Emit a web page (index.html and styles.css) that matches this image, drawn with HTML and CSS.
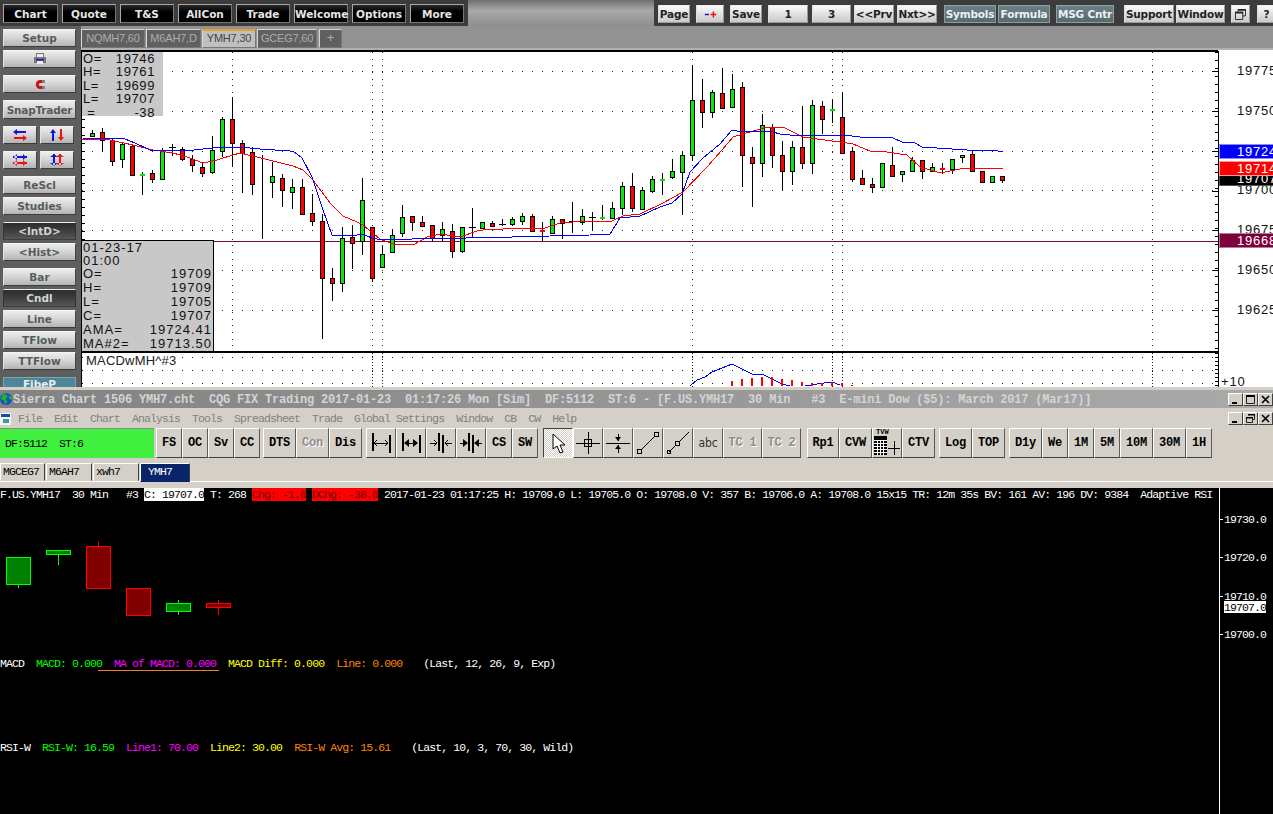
FILE: index.html
```html
<!DOCTYPE html>
<html lang="en">
<head>
<meta charset="utf-8">
<title>Sierra Chart</title>
<link rel="stylesheet" href="styles.css">
</head>
<body>
<div class="app">
  <section class="upper">
    <header class="topbar">
      <nav class="blackgroup">
        <button class="bk first">Chart</button><button class="bk">Quote</button><button class="bk">T&amp;S</button><button class="bk">AllCon</button><button class="bk">Trade</button><button class="bk">Welcome</button><button class="bk">Options</button><button class="bk">More</button>
      </nav>
      <div class="fade"></div>
      <div class="lightgroup">
        <button class="lt w32">Page</button>
        <button class="lt w28 gapl"><svg class="ic12" viewBox="0 0 18 10"><path class="i-blue" d="M1 4h6v2H1z"/><path class="i-red" d="M9 4h3V1h2v3h3v2h-3v3h-2V6H9z"/></svg></button>
        <button class="lt w32 gapl">Save</button>
        <button class="lt w40 gapl">1</button>
        <button class="lt w39 gap4">3</button>
        <button class="lt w40 gap3">&lt;&lt;Prv</button>
        <button class="lt w40 gap3">Nxt&gt;&gt;</button>
        <button class="lt w52 teal gap7">Symbols</button>
        <button class="lt w52 teal gap2">Formula</button>
        <button class="lt w58 teal gapl">MSG Cntr</button>
        <button class="lt w50 gap10">Support</button>
        <button class="lt w49 gap2">Window</button>
        <button class="lt w19 gapl"><svg class="ic12" viewBox="0 0 12 12"><path class="i-line" d="M3.500 .5h8v7h-3M3.500 .5v2M.5 3.500h8v8h-8z"/><path class="i-fill" d="M3 0h9v2H3zM0 3h9v2H0z"/></svg></button>
        <button class="lt w19 gap7">?</button>
      </div>
    </header>
    <div class="workspace">
      <aside class="sidebar">
        <div class="sidegroup"><button class="sb">Setup</button>
          <button class="sb"><svg class="ic14" viewBox="0 0 14 12"><path class="i-gray" d="M3 0h8v4H3zM1 4h12v6H1z"/><path class="i-lightfill" d="M4 1h6v3H4zM4 8h6v3H4z"/><path class="i-blue" d="M3 6h8v1.500H3z"/></svg></button></div>
        <div class="sidegroup"><button class="sb"><svg class="icmag" viewBox="0 0 14 12"><path class="i-darkred" d="M8 0h3v4H8a2 2 0 0 0 0 4h3v4H8A6 6 0 0 1 8 0z"/><path class="i-gray" d="M11 0h3v4h-3zM11 8h3v4h-3z"/></svg></button></div>
        <div class="sidegroup"><button class="sb snap">SnapTrader</button></div>
        <div class="siderow">
          <button class="sb half"><svg class="ic14" viewBox="0 0 14 12"><path class="i-blue" d="M4 0v2h9v2H4v2L0 3z"/><path class="i-red" d="M10 6v2H1v2h9v2l4-3z"/></svg></button>
          <button class="sb half"><svg class="ic14" viewBox="0 0 14 12"><path class="i-blue" d="M3 0 0 4h2v8h2V4h2z"/><path class="i-red" d="M11 12l3-4h-2V0h-2v8H8z"/></svg></button>
        </div>
        <div class="siderow">
          <button class="sb half"><svg class="ic14" viewBox="0 0 14 12"><path class="i-blue" d="M0 2h14v2H0zM4 0l-3 3 3 3zM10 0l3 3-3 3z"/><path class="i-red" d="M0 8h14v2H0zM4 6l-3 3 3 3zM10 6l3 3-3 3z"/></svg></button>
          <button class="sb half"><svg class="ic14" viewBox="0 0 14 12"><path class="i-blue" d="M3 0h2v12H3zM0 3l4-3 4 3zM0 9l4 3 4-3z"/><path class="i-red" d="M9 0h2v12H9zM6 3l4-3 4 3zM6 9l4 3 4-3z"/></svg></button>
        </div>
        <div class="sidegroup"><button class="sb">ReScl</button><button class="sb">Studies</button></div>
        <div class="sidegroup"><button class="sb dark">&lt;IntD&gt;</button><button class="sb">&lt;Hist&gt;</button></div>
        <div class="sidegroup"><button class="sb">Bar</button><button class="sb dark">Cndl</button><button class="sb">Line</button><button class="sb">TFlow</button><button class="sb">TTFlow</button></div>
        <div class="sidegroup"><button class="sb fibe">FibeP</button></div>
      </aside>
      <div class="maincol">
        <div class="charttabs">
          <span class="ct t64">NQMH7,60</span><span class="ct t55">M6AH7,D</span><span class="ct t54 on">YMH7,30</span><span class="ct t60">GCEG7,60</span><span class="ct t23 plus">+</span>
        </div>
        <div class="chart">
          <svg class="plot" viewBox="81 50 1192 337" width="1192" height="337">
            <rect class="paper" x="81" y="50" width="1192" height="337"/>
            <g class="dots">
              <path d="M82 71.500H1216M82 111.500H1216M82 151.500H1216M82 190.500H1216M82 230.500H1216M82 270.500H1216M82 310.500H1216M82 357.500H1216M82 370.500H1216M82 383.500H1216"/>
            </g>
            <g class="vdots">
              <path d="M232.500 52V350M372.500 52V350M382.500 52V350M692.500 52V350M832.500 52V350M842.500 52V350M1152.500 52V350"/>
            </g>
            <g class="vdots dense">
              <path d="M372.500 353V387M382.500 353V387M692.500 353V387M832.500 353V387M842.500 353V387M1152.500 353V387"/>
            </g>
            <path class="wine" d="M82 241.500H1218"/>
            <path class="wick" d="M92.500 130V137M102.500 128V152M112.500 139V166M122.500 142V168M132.500 144V175M142.500 172V195M152.500 170V183M162.500 148V179M172.500 144V156M169 147.500h7M182.500 147V161M192.500 155V172M202.500 163V177M212.500 136V174M222.500 117V157M232.500 97V167M242.500 140V193M252.500 147V195M262.500 155V239M272.500 162V198M282.500 174V207M292.500 179V209M302.500 179V214M312.500 194V226M322.500 214V339M332.500 268V301M342.500 227V292M352.500 225V269M362.500 178V255M372.500 227V282M382.500 246V267M392.500 229V253M402.500 205V237M412.500 216V231M422.500 216V227M432.500 225V241M442.500 222V241M452.500 224V258M462.500 227V253M472.500 208V237M469 227.500h7M482.500 222V228M492.500 221V226M502.500 219V226M499 224.500h7M512.500 217V226M522.500 213V225M532.500 214V231M542.500 222V241M552.500 216V233M562.500 219V239M572.500 202V233M569 221.500h7M582.500 209V225M592.500 212V231M589 217.500h7M602.500 205V220M612.500 202V218M622.500 182V215M632.500 173V212M642.500 187V210M652.500 176V193M662.500 173V195M672.500 159V179M682.500 152V215M692.500 65V161M702.500 79V128M712.500 90V118M722.500 68V108M732.500 74V107M742.500 82V187M752.500 147V207M762.500 114V177M772.500 124V168M782.500 141V191M792.500 141V185M802.500 106V169M812.500 100V174M822.500 101V134M832.500 100V123M842.500 93V153M852.500 147V182M862.500 170V185M872.500 178V193M882.500 163V188M892.500 147V177M902.500 171V182M912.500 157V172M922.500 160V179M932.500 163V172M942.500 163V174M952.500 159V174M962.500 155V163M972.500 151V172M982.500 171V183M992.500 176V183M1002.500 176V183"/>
            <path class="up" d="M90.500 133.500h4v3h-4zM120.500 144.500h4v15h-4zM160.500 150.500h4v29h-4zM210.500 150.500h4v22h-4zM220.500 119.500h4v32h-4zM270.500 176.500h4v6h-4zM290.500 187.500h4v5h-4zM340.500 238.500h4v45h-4zM360.500 200.500h4v41h-4zM380.500 254.500h4v13h-4zM390.500 235.500h4v17h-4zM400.500 217.500h4v16h-4zM440.500 229.500h4v6h-4zM460.500 227.500h4v24h-4zM480.500 222.500h4v6h-4zM510.500 219.500h4v5h-4zM520.500 216.500h4v5h-4zM550.500 219.500h4v14h-4zM580.500 216.500h4v6h-4zM610.500 208.500h4v10h-4zM620.500 186.500h4v22h-4zM640.500 190.500h4v19h-4zM650.500 179.500h4v12h-4zM670.500 171.500h4v6h-4zM680.500 155.500h4v17h-4zM690.500 100.500h4v55h-4zM710.500 92.500h4v20h-4zM730.500 89.500h4v18h-4zM760.500 125.500h4v38h-4zM790.500 147.500h4v24h-4zM810.500 105.500h4v58h-4zM880.500 163.500h4v24h-4zM900.500 171.500h4v3h-4zM910.500 160.500h4v11h-4zM930.500 167.500h4v4h-4zM950.500 159.500h4v10h-4zM960.500 155.500h4v2h-4zM990.500 176.500h4v6h-4z"/>
            <path class="down" d="M100.500 132.500h4v8h-4zM110.500 140.500h4v21h-4zM130.500 146.500h4v29h-4zM150.500 173.500h4v6h-4zM180.500 149.500h4v10h-4zM190.500 159.500h4v6h-4zM200.500 167.500h4v6h-4zM230.500 119.500h4v24h-4zM240.500 143.500h4v10h-4zM250.500 152.500h4v32h-4zM280.500 178.500h4v12h-4zM300.500 187.500h4v27h-4zM310.500 213.500h4v8h-4zM320.500 221.500h4v57h-4zM330.500 278.500h4v5h-4zM350.500 237.500h4v6h-4zM370.500 227.500h4v51h-4zM410.500 216.500h4v6h-4zM420.500 222.500h4v4h-4zM430.500 225.500h4v13h-4zM450.500 231.500h4v20h-4zM490.500 223.500h4v3h-4zM530.500 216.500h4v15h-4zM560.500 219.500h4v4h-4zM630.500 186.500h4v22h-4zM700.500 100.500h4v12h-4zM720.500 93.500h4v15h-4zM740.500 87.500h4v68h-4zM750.500 157.500h4v6h-4zM770.500 127.500h4v28h-4zM780.500 155.500h4v16h-4zM800.500 147.500h4v16h-4zM820.500 106.500h4v13h-4zM840.500 117.500h4v36h-4zM850.500 151.500h4v28h-4zM860.500 178.500h4v6h-4zM870.500 184.500h4v3h-4zM890.500 165.500h4v11h-4zM920.500 160.500h4v11h-4zM970.500 154.500h4v17h-4zM980.500 171.500h4v11h-4zM1000.500 176.500h4v4h-4z"/>
            <path class="doji-g" d="M140 174.500h5M600 217.500h5M660 179.500h5M830 109.500h5"/>
            <path class="doji-r" d="M540 230.500h5M940 168.500h5"/>
            <polyline class="ln-red" points="82,139 110,140 133,145 153,150 173,153 187,157 203,163 217,160 233,155 240,153 265,159 293,166 303,170 313,180 330,203 343,216 357,222 363,225 380,239 393,244 413,245 427,237 440,234 460,237 477,231 490,229 503,229 527,228 545,228 560,223 587,221 612,221 623,216 640,214 663,203 683,192 707,167 722,150 733,137 743,134 767,127 783,127 803,137 817,139 840,142 853,144 870,151 887,152 907,155 920,167 940,173 960,169 973,168 1003,169"/>
            <polyline class="ln-blue" points="82,138 125,139 135,143 150,150 165,150 185,151 222,147 240,147 260,149 290,151 293,151 302,158 312,177 322,207 332,235 342,235 352,236 362,234 372,238 382,240 392,239 412,239 422,238 450,238 460,239 472,237 512,237 550,236 590,235 610,234 620,218 640,216 660,207 672,203 682,194 690,172 703,158 720,144 732,130 737,131 773,132 780,134 800,136 827,135 843,135 860,137 893,138 902,142 915,143 922,147 937,148 967,150 993,150 1003,152"/>
            <polyline class="ln-blue" points="690,386 697,380 705,377 712,372 722,368 732,364 752,374 762,374 782,384 790,386"/>
            <polyline class="ln-blue" points="805,386 817,384 832,382 840,385"/>
            <path class="hist" d="M731 381h2v5h-2zM741 379h2v7h-2zM751 378h2v8h-2zM761 377h2v9h-2zM771 377h2v9h-2zM781 379h2v7h-2zM791 380h2v6h-2zM801 382h2v4h-2zM811 383h2v3h-2zM821 383h2v3h-2zM831 382h2v4h-2zM841 383h2v3h-2zM851 385h2v1h-2z"/>
            <path class="frame" d="M81 51H1218"/>
            <path class="frame thin" d="M81.500 51V387M1218.500 51V387"/>
            <path class="frame heavy" d="M81 351.500H1218"/>
            <path class="ticks-r" d="M1216.500 52V350"/>
            <path class="ticks-rM" d="M1212 71.500h6M1212 111.500h6M1212 151.500h6M1212 191.500h6M1212 230.500h6M1212 270.500h6M1212 310.500h6"/>
            <path class="ticks-rs" d="M1216.500 353V387"/>
            <path class="ticks-l" d="M83 55V240"/>
            <text class="px" x="1237" y="75">19775</text>
            <text class="px" x="1237" y="115">19750</text>
            <text class="px" x="1237" y="194">19700</text>
            <text class="px" x="1237" y="234">19675</text>
            <text class="px" x="1237" y="274">19650</text>
            <text class="px" x="1237" y="314">19625</text>
            <text class="px" x="1221" y="386">+10</text>
            <rect class="tag-bk" x="1219.500" y="170.500" width="56" height="15"/>
            <text class="px wt" x="1237" y="183">19707</text>
            <rect class="tag-bl" x="1219.500" y="144.500" width="56" height="14"/>
            <text class="px wt" x="1237" y="156">19724</text>
            <rect class="tag-rd" x="1219.500" y="161.500" width="56" height="14"/>
            <text class="px wt" x="1237" y="173">19714</text>
            <rect class="tag-wn" x="1219.500" y="233.500" width="56" height="14"/>
            <text class="px wt" x="1237" y="245">19668</text>
          </svg>
          <div class="ohlc">
            <div class="kv"><span>O=</span><span>19746</span></div>
            <div class="kv"><span>H=</span><span>19761</span></div>
            <div class="kv"><span>L=</span><span>19699</span></div>
            <div class="kv"><span>L=</span><span>19707</span></div>
            <div class="kv"><span>&nbsp;=</span><span>-38</span></div>
          </div>
          <div class="hover">
            <div class="kv2 short">01-23-17</div>
            <div class="kv2 short">01:00</div>
            <div class="kv2 sb2"><span>O=</span><span>19709</span></div>
            <div class="kv2 sb2"><span>H=</span><span>19709</span></div>
            <div class="kv2 sb2"><span>L=</span><span>19705</span></div>
            <div class="kv2 sb2"><span>C=</span><span>19707</span></div>
            <div class="kv2 sb2"><span>AMA=</span><span>19724.41</span></div>
            <div class="kv2 sb2"><span>MA#2=</span><span>19713.50</span></div>
          </div>
          <div class="studyname">MACDwMH^#3</div>
        </div>
      </div>
    </div>
  </section>

  <div class="strip"></div>

  <section class="lower">
    <div class="titlebar">
      <svg class="globe" viewBox="0 0 14 14"><circle class="g-sea" cx="6.500" cy="7" r="6.500"/><path class="g-land" d="M3 2h4l1 3-2 2 2 3-2 3-2-4-3-2zM9 4h3l1 3-2 1z"/></svg>
      <span class="titletext">Sierra Chart 1506 YMH7.cht  CQG FIX Trading 2017-01-23  01:17:26 Mon [Sim]  DF:5112  ST:6 - [F.US.YMH17  30 Min   #3  E-mini Dow ($5): March 2017 (Mar17)]</span>
      <div class="winctl">
        <button class="wb"><svg class="wi" viewBox="0 0 9 9"><path d="M1 7h5v2H1z"/></svg></button><button class="wb"><svg class="wi" viewBox="0 0 9 9"><path class="i-line" d="M.5 1.500h8v7h-8z"/><path d="M0 0h9v2H0z"/></svg></button><button class="wb"><svg class="wi" viewBox="0 0 9 9"><path class="i-xline" d="M1 1l7 7M8 1 1 8"/></svg></button>
      </div>
    </div>
    <div class="menubar">
      <svg class="docicon" viewBox="0 0 11 12"><path class="d-w" d="M0 0h11v12H0z"/><path class="d-b" d="M1 1h9v3H1z"/><path class="d-g" d="M3 6h6v4H3z"/></svg>
      <nav class="menus"><span>File</span><span>Edit</span><span>Chart</span><span>Analysis</span><span>Tools</span><span>Spreadsheet</span><span>Trade</span><span>Global Settings</span><span>Window</span><span>CB</span><span>CW</span><span>Help</span></nav>
      <div class="winctl">
        <button class="wb"><svg class="wi" viewBox="0 0 9 9"><path d="M1 7h5v2H1z"/></svg></button><button class="wb"><svg class="wi" viewBox="0 0 9 9"><path class="i-line" d="M2.500 .5h6v5h-2M.5 3.500h6v5h-6z"/><path d="M2 0h7v1.500H2zM0 3h7v1.500H0z"/></svg></button><button class="wb"><svg class="wi" viewBox="0 0 9 9"><path class="i-xline" d="M1 1l7 7M8 1 1 8"/></svg></button>
      </div>
    </div>
    <div class="toolbar">
      <div class="greenbox">DF:5112  ST:6</div>
      <button class="tb b26 ml2">FS</button><button class="tb b26">OC</button><button class="tb b26">Sv</button><button class="tb b26">CC</button>
      <button class="tb b33 ml3">DTS</button><button class="tb b33 off">Con</button><button class="tb b33">Dis</button>
      <button class="tb b30 ml4"><svg class="tool" viewBox="0 0 22 24"><path class="t-k2" d="M2.500 2v18M19.500 4v18"/><path class="t-k" d="M4 12h14M7 9l-3 3 3 3M15 9l3 3-3 3"/></svg></button>
      <button class="tb b30"><svg class="tool" viewBox="0 0 22 24"><path class="t-k2" d="M2.500 2v18M19.500 4v18"/><path class="t-k" d="M8 12h6"/><path class="t-f" d="M9 8l-5 4 5 4zM13 8l5 4-5 4z"/></svg></button>
      <button class="tb b30"><svg class="tool" viewBox="0 0 24 24"><path class="t-k2" d="M9.500 2v18M13.500 4v18"/><path class="t-k" d="M1 12h7M5 9l3 3-3 3M23 12h-7M19 9l-3 3 3 3"/></svg></button>
      <button class="tb b30"><svg class="tool" viewBox="0 0 24 24"><path class="t-k2" d="M9.500 2v18M13.500 4v18"/><path class="t-k" d="M1 12h3M23 12h-3"/><path class="t-f" d="M4 8l5 4-5 4zM20 8l-5 4 5 4z"/></svg></button>
      <button class="tb b26">CS</button><button class="tb b26">SW</button>
      <button class="tb b30 ml5 pressed"><svg class="tool" viewBox="0 0 22 24"><path class="t-cur" d="M6 3v15l4-3 3 7 3-1-3-7h5z"/></svg></button>
      <button class="tb b30"><svg class="tool" viewBox="0 0 24 24"><path class="t-k" d="M0 12h24M12 1v22"/><path class="t-sq" d="M8.500 8.500h7v7h-7z"/></svg></button>
      <button class="tb b30"><svg class="tool" viewBox="0 0 24 24"><path class="t-k" d="M0 12h24M12 3v7M12 14v8"/><path class="t-f" d="M9 6h6l-3 4zM9 18h6l-3-4z"/></svg></button>
      <button class="tb b30"><svg class="tool" viewBox="0 0 24 24"><path class="t-k" d="M5 19 19 5"/><path class="t-sq" d="M1.500 18.500h4v4h-4zM18.500 1.500h4v4h-4z"/></svg></button>
      <button class="tb b30"><svg class="tool" viewBox="0 0 24 24"><path class="t-k" d="M3 21l7-7M14 10l9-9"/><path class="t-sq" d="M1.500 19.500h3v3h-3zM9.500 10.500h4v4h-4z"/></svg></button>
      <button class="tb b30 abc">abc</button>
      <button class="tb b39 off">TC 1</button><button class="tb b39 off">TC 2</button>
      <button class="tb b32 ml6">Rp1</button><button class="tb b33">CVW</button>
      <button class="tb b30 tblbtn"><span class="tvw">TVW</span><svg class="tool" viewBox="0 0 28 22"><path class="t-f" d="M1 1h13v19H1z"/><path class="t-wl" d="M1 5.500h13M1 8.500h13M1 11.500h13M1 14.500h13M1 17.500h13M4.500 5v15M7.500 5v15M10.500 5v15"/><path class="t-k" d="M15 13h12M21 6v14"/></svg></button>
      <button class="tb b33">CTV</button>
      <button class="tb b33 ml4">Log</button><button class="tb b33">TOP</button>
      <button class="tb b33 ml4">D1y</button><button class="tb b26">We</button><button class="tb b26">1M</button><button class="tb b26">5M</button><button class="tb b33">10M</button><button class="tb b33">30M</button><button class="tb b26">1H</button>
    </div>
    <div class="doctabs">
      <span class="dt d44">MGCEG7</span><span class="dt d45">M6AH7</span><span class="dt d46">xwh7</span><span class="dt d50 sel">YMH7</span>
    </div>
    <div class="blackpanel">
      <div class="bpmain">
        <div class="status">F.US.YMH17  30 Min   #3 <span class="hl-w">C: 19707.0</span> T: 268 <span class="hl-r">Chg: -1.0</span> <span class="hl-r">DChg: -38.0</span> 2017-01-23 01:17:25 H: 19709.0 L: 19705.0 O: 19708.0 V: 357 B: 19706.0 A: 19708.0 15x15 TR: 12m 35s BV: 161 AV: 196 DV: 9384  Adaptive RSI</div>
        <svg class="minichart" viewBox="0 502 1219 155" width="1219" height="155">
          <path class="mw-g" d="M18.500 585v3M58.500 555v10M178.500 600v3M178.500 612v3"/>
          <path class="mw-r" d="M98.500 542v4M218.500 600v3M218.500 607v8"/>
          <path class="mb-g" d="M6.500 557.500h24v27h-24zM46.500 550.500h24v4h-24zM166.500 603.500h24v8h-24z"/>
          <path class="mb-r" d="M86.500 546.500h24v42h-24zM126.500 588.500h24v27h-24zM206.500 603.500h24v4h-24z"/>
        </svg>
        <div class="study macd"><span class="c-w">MACD</span>  <span class="c-g">MACD: 0.000</span>  <span class="c-m">MA of MACD: 0.000</span>  <span class="c-y">MACD Diff: 0.000</span>  <span class="c-o">Line: 0.000</span><span class="c-w params">(Last, 12, 26, 9, Exp)</span><i class="oline"></i></div>
        <div class="study rsi"><span class="c-w">RSI-W</span>  <span class="c-g">RSI-W: 16.59</span>  <span class="c-m">Line1: 70.00</span>  <span class="c-y">Line2: 30.00</span>  <span class="c-o">RSI-W Avg: 15.61</span><span class="c-w params">(Last, 10, 3, 70, 30, Wild)</span></div>
      </div>
      <svg class="bpaxis" viewBox="1220 488 53 326" width="53" height="326">
        <path class="axt" d="M1220 519.500h3M1220 557.500h3M1220 596.500h3M1220 634.500h3"/>
        <text class="axl" x="1224" y="523">19730.0</text>
        <text class="axl" x="1224" y="561">19720.0</text>
        <text class="axl" x="1224" y="600">19710.0</text>
        <rect class="axbox" x="1224" y="601" width="42" height="12"/>
        <text class="axl inv" x="1224" y="611">19707.0</text>
        <text class="axl" x="1224" y="638">19700.0</text>
      </svg>
    </div>
  </section>
</div>
</body>
</html>
```

FILE: styles.css
```css
* { box-sizing: border-box; }
html, body { margin: 0; padding: 0; background: #000; }
body { width: 1273px; height: 814px; overflow: hidden; }
button { font: inherit; margin: 0; padding: 0; cursor: default; }
svg { display: block; }

.app { width: 1273px; height: 814px; display: flex; flex-direction: column; font-family: "DejaVu Sans", sans-serif; }

/* upper window */
.upper { height: 387px; display: flex; flex-direction: column; overflow: hidden; }
.topbar { height: 26px; display: flex; flex: none; background: #3c3c3c; }
.blackgroup { width: 468px; display: flex; gap: 4px; padding: 4px 0 0 3px; }
.bk { width: 54px; height: 19px; background: linear-gradient(#2a2a2a, #000 40%, #000); color: #e6e6e6; border: 1px solid #a8a8a8; border-right-color: #777; border-bottom-color: #777; font: bold 10.500px "DejaVu Sans", sans-serif; white-space: nowrap; }
.bk.first { width: 55px; }
.fade { width: 186px; background: linear-gradient(#6e6e6e, #a9a9a9 40%, #8e8e8e); }
.lightgroup { flex: 1; display: flex; padding: 5px 0 0 4px; overflow: hidden; }
.lt { height: 18px; flex: none; display: flex; align-items: center; justify-content: center; background: linear-gradient(#fafafa, #dcdcdc 60%, #c9c9c9); border: 1px solid #999; border-top-color: #eee; border-left-color: #ddd; color: #222; font: bold 10.500px "DejaVu Sans", sans-serif; white-space: nowrap; letter-spacing: -.2px; }
.lt.teal { background: linear-gradient(#6a8085, #59696d); color: #eaf2f2; border-color: #8d9ea1; }
.w19 { width: 19px; } .w28 { width: 28px; } .w32 { width: 32px; } .w39 { width: 39px; } .w40 { width: 40px; } .w49 { width: 49px; } .w50 { width: 50px; } .w52 { width: 52px; } .w58 { width: 58px; }
.gapl { margin-left: 6px; } .gap2 { margin-left: 2px; } .gap3 { margin-left: 3px; } .gap4 { margin-left: 4px; } .gap7 { margin-left: 7px; } .gap10 { margin-left: 10px; }
.ic12 { width: 13px; height: 11px; }
.ic14 { width: 14px; height: 12px; }
.icmag { width: 11px; height: 9px; }
.i-blue { fill: #1414d8; } .i-red { fill: #ee1111; } .i-darkred { fill: #c81414; } .i-gray { fill: #777; } .i-lightfill { fill: #eee; } .i-fill { fill: #222; }
.i-line { fill: none; stroke: #222; stroke-width: 1; }
.i-xline { fill: none; stroke: #000; stroke-width: 1.600; }

.workspace { flex: 1; display: flex; min-height: 0; }
.sidebar { width: 81px; flex: none; background: #5e5e5e; padding: 3px 0 0 3px; display: flex; flex-direction: column; gap: 7px; overflow: hidden; }
.sidegroup { display: flex; flex-direction: column; gap: 3px; flex: none; }
.siderow { display: flex; gap: 3px; flex: none; }
.sb { width: 73px; height: 18px; flex: none; display: flex; align-items: center; justify-content: center; background: linear-gradient(#ededed, #d4d4d4 50%, #b4b4b4); border: 1px solid #8c8c8c; border-top-color: #f4f4f4; border-left-color: #e4e4e4; border-bottom-color: #3c3c3c; border-right-color: #444; color: #565c5c; font: bold 10.500px "DejaVu Sans", sans-serif; white-space: nowrap; }
.sb.snap { height: 19px; font-size: 10.500px; letter-spacing: -.2px; }
.sb.half { width: 34px; }
.sb.dark { background: linear-gradient(#2c2c2c, #3e3e3e 50%, #565656); color: #cfd4d4; border-top-color: #eee; border-left-color: #333; border-right-color: #333; }
.sb.fibe { height: 30px; background: linear-gradient(#4c8398, #5f93a8); color: #e6eef0; border-color: #7aa; align-items: flex-start; }

.maincol { flex: 1; display: flex; flex-direction: column; min-width: 0; }
.charttabs { height: 24px; flex: none; display: flex; gap: 1px; padding-top: 3px; background: #929292; border-bottom: 2px solid #b0b0b0; }
.ct { height: 19px; background: #606060; color: #adadad; border: 1px solid #777; border-top-color: #d8d8d8; border-left-color: #d8d8d8; font: 11px/16px "Liberation Sans", sans-serif; text-align: center; white-space: nowrap; letter-spacing: -.2px; }
.ct.on { background: #bfbfbf; color: #444; border-top: 2px solid #e4a228; line-height: 15px; }
.ct.plus { margin-left: 1px; font-size: 13px; }
.t64 { width: 64px; } .t55 { width: 55px; } .t54 { width: 54px; } .t60 { width: 60px; } .t23 { width: 23px; }

.chart { position: relative; width: 1192px; height: 337px; flex: none; }
.plot { width: 1192px; height: 337px; }
.paper { fill: #fff; }
.dots path { fill: none; stroke: #222; stroke-width: 1; stroke-dasharray: 1 9; shape-rendering: crispEdges; }
.vdots path { fill: none; stroke: #222; stroke-width: 1; stroke-dasharray: 1 5.670; shape-rendering: crispEdges; }
.vdots.dense path { stroke-dasharray: 1 2; }
.wine { stroke: #6b0b3b; stroke-width: 1; fill: none; shape-rendering: crispEdges; }
.wick { stroke: #000; stroke-width: 1; fill: none; shape-rendering: crispEdges; }
.up { fill: #0ce60c; stroke: #000; stroke-width: 1; shape-rendering: crispEdges; }
.down { fill: #ff0000; stroke: #000; stroke-width: 1; shape-rendering: crispEdges; }
.doji-g { stroke: #00e800; stroke-width: 2; fill: none; shape-rendering: crispEdges; }
.doji-r { stroke: #ff0000; stroke-width: 2; fill: none; shape-rendering: crispEdges; }
.ln-red { fill: none; stroke: #ff0000; stroke-width: 1; shape-rendering: crispEdges; }
.ln-blue { fill: none; stroke: #0000ff; stroke-width: 1; shape-rendering: crispEdges; }
.hist { fill: #ff0000; }
.frame { stroke: #000; stroke-width: 2; fill: none; shape-rendering: crispEdges; }
.frame.thin { stroke-width: 1; }
.frame.heavy { stroke-width: 2; }
.ticks-r { stroke: #000; stroke-width: 3; stroke-dasharray: 1 7; fill: none; shape-rendering: crispEdges; }
.ticks-rM { stroke: #000; stroke-width: 1; fill: none; shape-rendering: crispEdges; }
.ticks-rs { stroke: #000; stroke-width: 3; stroke-dasharray: 1 3; fill: none; shape-rendering: crispEdges; }
.ticks-l { stroke: #000; stroke-width: 3; stroke-dasharray: 1 7; fill: none; shape-rendering: crispEdges; }
.px { font: 13px "Liberation Sans", Arial, sans-serif; letter-spacing: .8px; fill: #111; }
.px.wt { fill: #fff; }
.tag-bk { fill: #000; stroke: #555; }
.tag-bl { fill: #0000ff; stroke: #8a8af0; }
.tag-rd { fill: #ff0000; stroke: #ff9a9a; }
.tag-wn { fill: #7d003d; stroke: #b37a96; }

.ohlc { position: absolute; left: 1px; top: 2px; width: 81px; height: 64px; background: #c8c8c8; padding: 0 8px 0 1px; font: 13px/13.400px "Liberation Sans", Arial, sans-serif; letter-spacing: .6px; color: #111; }
.kv { display: flex; justify-content: space-between; }
.hover { position: absolute; left: 1px; top: 190px; width: 132px; height: 111px; background: #c8c8c8; border-top: 1px solid #000; border-right: 1px solid #000; padding: 0 1px 0 1px; font: 13px/14px "Liberation Sans", Arial, sans-serif; letter-spacing: 1px; color: #111; }
.kv2 { height: 14px; }
.kv2.short { height: 13px; line-height: 13px; }
.sb2 { display: flex; justify-content: space-between; }
.studyname { position: absolute; left: 5px; top: 304px; font: 13px/14px "Liberation Sans", Arial, sans-serif; letter-spacing: .2px; color: #222; background: #fff; }

.strip { height: 3px; flex: none; background: #d4d0c8; }

/* lower window */
.lower { flex: 1; display: flex; flex-direction: column; min-height: 0; background: #d4d0c8; font-family: "Liberation Mono", monospace; }
.titlebar { height: 18px; flex: none; display: flex; align-items: center; background: linear-gradient(90deg, #828282, #aaaaaa); }
.globe { width: 13px; height: 14px; flex: none; }
.g-sea { fill: #1450c8; } .g-land { fill: #1eb428; }
.titletext { color: #d4d4d4; font: bold 12px/18px "Liberation Mono", monospace; letter-spacing: -.2px; white-space: pre; padding-top: 1px; }
.winctl { margin-left: auto; display: flex; flex: none; }
.wb { width: 15px; height: 13px; display: flex; align-items: center; justify-content: center; background: #d4d0c8; border: 1px solid; border-color: #fff #404040 #404040 #fff; }
.wi { width: 9px; height: 9px; }
.menubar { height: 20px; flex: none; display: flex; align-items: center; padding-top: 1px; background: #d4d0c8; }
.docicon { width: 11px; height: 12px; flex: none; }
.d-w { fill: #f4f4f4; } .d-b { fill: #1c4a9c; } .d-g { fill: #3a9c9c; }
.menus { display: flex; gap: 12px; margin-left: 7px; color: #808080; font: 11.500px/14px "Liberation Mono", monospace; letter-spacing: -.9px; white-space: pre; }
.toolbar { height: 30px; flex: none; display: flex; background: #d4d0c8; }
.greenbox { width: 154px; height: 30px; background: #41f03f; border-top: 1px solid #888; color: #000; font: 11.500px/30px "Liberation Mono", monospace; letter-spacing: -.9px; padding-left: 5px; white-space: pre; }
.tb { height: 30px; flex: none; position: relative; display: flex; align-items: center; justify-content: center; background: #d4d0c8; border: 1px solid; border-color: #fff #5a5a5a #404040 #fff; color: #000; font: bold 12px/14px "Liberation Mono", monospace; letter-spacing: -.2px; white-space: pre; }
.tb.off { color: #8e8e8e; text-shadow: 1px 1px 0 #fff; }
.tb.abc { font: 12px "DejaVu Sans Condensed", "DejaVu Sans", sans-serif; color: #333; }
.tb.pressed { background: repeating-conic-gradient(#fff 0 25%, #d4d0c8 0 50%) 0 0 / 2px 2px; border-color: #404040 #fff #fff #404040; }
.b26 { width: 26px; } .b30 { width: 30px; } .b32 { width: 32px; } .b33 { width: 33px; } .b39 { width: 39px; }
.ml2 { margin-left: 2px; } .ml3 { margin-left: 3px; } .ml4 { margin-left: 4px; } .ml5 { margin-left: 5px; } .ml6 { margin-left: 6px; }
.tool { width: 24px; height: 24px; }
.tblbtn .tool { width: 28px; height: 22px; margin-top: 5px; }
.tvw { position: absolute; left: 3px; top: 0; font: bold 7px/7px "Liberation Mono", monospace; letter-spacing: 0; }
.t-k { fill: none; stroke: #000; stroke-width: 1; shape-rendering: crispEdges; }
.t-k2 { fill: none; stroke: #000; stroke-width: 2; shape-rendering: crispEdges; }
.t-f { fill: #000; }
.t-sq { fill: none; stroke: #000; stroke-width: 1; shape-rendering: crispEdges; }
.t-cur { fill: #fff; stroke: #000; stroke-width: 1; }
.t-wl { fill: none; stroke: #fff; stroke-width: 1; shape-rendering: crispEdges; }
.doctabs { height: 30px; flex: none; display: flex; gap: 1px; padding-top: 5px; background: linear-gradient(#d4d0c8 23px, #fff 23px, #fff 24px, #d4d0c8 24px); }
.dt { height: 18px; background: #d4d0c8; border: 1px solid; border-color: #fff #404040 transparent #fff; color: #000; font: 11.500px/15px "Liberation Mono", monospace; letter-spacing: -.9px; padding-left: 2px; }
.d44 { width: 45px; } .d45 { width: 46px; } .d46 { width: 46px; } .d50 { width: 50px; }
.dt.sel { background: #0a246a; color: #fff; height: 19px; padding-left: 7px; }
.blackpanel { flex: 1; display: flex; background: #000; min-height: 0; }
.bpmain { width: 1219px; flex: none; position: relative; color: #fff; font: 11.500px/14px "Liberation Mono", monospace; letter-spacing: -.9px; }
.status { height: 14px; white-space: pre; }
.hl-w { background: #fff; color: #000; }
.hl-r { background: #ff0000; color: #700; }
.minichart { width: 1219px; height: 155px; }
.mw-g { stroke: #00ff00; fill: none; shape-rendering: crispEdges; }
.mw-r { stroke: #ff0000; fill: none; shape-rendering: crispEdges; }
.mb-g { fill: #008000; stroke: #00ff00; shape-rendering: crispEdges; }
.mb-r { fill: #800000; stroke: #ff0000; shape-rendering: crispEdges; }
.study { height: 14px; position: relative; white-space: pre; }
.rsi { margin-top: 70px; }
.c-w { color: #fff; } .c-g { color: #00ff00; } .c-m { color: #ff00ff; } .c-y { color: #ffff00; } .c-o { color: #ff8000; }
.params { margin-left: 21px; }
.oline { position: absolute; left: 98px; top: 13px; width: 121px; height: 1px; background: #f08020; }
.bpaxis { flex: none; width: 54px; border-left: 1px solid #fff; }
.axt { stroke: #fff; fill: none; shape-rendering: crispEdges; }
.axl { font: 11.500px "Liberation Mono", monospace; letter-spacing: -.9px; fill: #fff; }
.axl.inv { fill: #000; }
.axbox { fill: #fff; }
```
